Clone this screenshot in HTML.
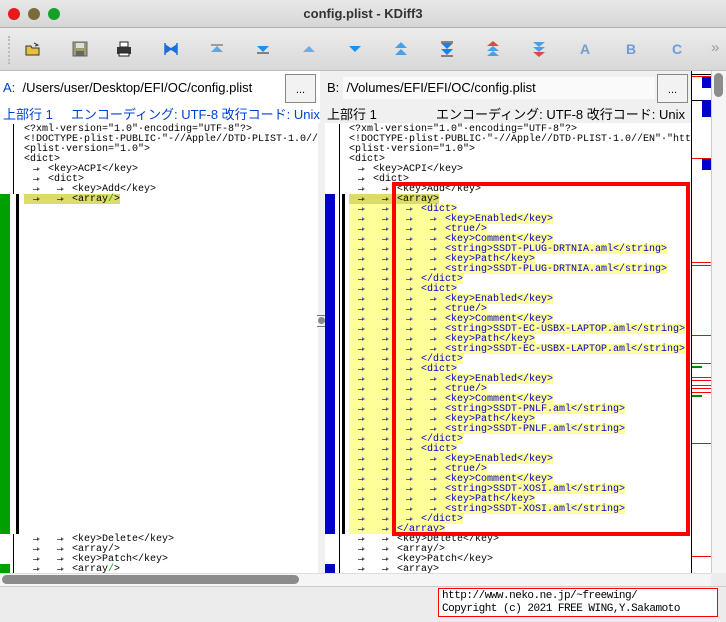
<!DOCTYPE html>
<html><head><meta charset="utf-8"><style>
*{margin:0;padding:0;box-sizing:border-box}
body{width:726px;height:622px;overflow:hidden;background:#ececec;font-family:"Liberation Sans","Noto Sans CJK JP",sans-serif;position:relative}
.abs{position:absolute}
#title{left:0;top:0;width:726px;height:28px;background:linear-gradient(#e8e8e8,#d6d6d6);border-bottom:1px solid #b0b0b0;text-align:center;font-size:13px;font-weight:bold;line-height:27px;color:#333}
.dot{top:8px;width:12px;height:12px;border-radius:50%}
#tb{left:0;top:29px;width:726px;height:42px;background:linear-gradient(#ececec,#d8d8d8);border-bottom:1px solid #bdbdbd}
.ic{top:41px;width:16px;height:16px}
.hdr{top:71px;height:52px}
.path{font-size:13px;color:#000}
.btn{width:31px;height:29px;border:1px solid #888;background:#f2f2f2;font-size:11px;text-align:center;line-height:30px}
.info{font-size:13px}
.code{font-family:"Liberation Mono",monospace;font-size:10px;line-height:11px;padding-top:3px}
.ln{height:10px;position:relative;white-space:pre}
.t{display:inline-block;width:24px;height:10px;position:relative;vertical-align:top}
.t::after{content:"";position:absolute;left:9px;top:5px;width:5px;height:1px;background:currentColor;opacity:.6}
.t::before{content:"";position:absolute;left:13px;top:3px;border-left:3px solid currentColor;border-top:2.5px solid transparent;border-bottom:2.5px solid transparent;opacity:.6}
.y{background:#ffff9a;display:inline-block;height:10px;vertical-align:top}
.d{background:#dcdc6c;display:inline-block;height:10px;vertical-align:top}
.b{color:#0000c8}
</style></head><body>
<div id="title" class="abs">config.plist - KDiff3</div>
<div class="abs dot" style="left:8px;background:#e8191b"></div>
<div class="abs dot" style="left:28px;background:#7d6a3c"></div>
<div class="abs dot" style="left:48px;background:#14a12a"></div>
<div id="tb" class="abs"></div>
<div class="abs" style="left:8px;top:36px;width:2px;height:28px;border-left:2px dotted #bbb"></div>
<div class="abs ic" style="left:25px;"><svg width="16" height="16"><path d="M1 5h5l1 2h7v7H1z" fill="#e5c13c" stroke="#333"/><path d="M9 2l4 2-3 1" fill="none" stroke="#333"/></svg></div>
<div class="abs ic" style="left:72px;"><svg width="16" height="16"><rect x="1" y="1" width="14" height="14" fill="#9c9c70" stroke="#666"/><rect x="4" y="2" width="8" height="5" fill="#ddd"/><rect x="4" y="10" width="8" height="5" fill="#666"/></svg></div>
<div class="abs ic" style="left:116px;"><svg width="16" height="16"><rect x="4" y="1" width="8" height="5" fill="#fff" stroke="#222"/><rect x="1" y="6" width="14" height="7" fill="#333"/><rect x="3" y="12" width="10" height="3" fill="#fff" stroke="#222"/></svg></div>
<div class="abs ic" style="left:163px;"><svg width="16" height="16"><path d="M2 2v12M14 2v12M2 4l6 4-6 4zM14 4l-6 4 6 4z" fill="#1a6fe0" stroke="#1a6fe0" stroke-width="1.5"/></svg></div>
<div class="abs ic" style="left:209px;"><svg width="16" height="16"><path d="M2 4h12" stroke="#555"/><path d="M8 5l6 6H2z" fill="#5aa8e8"/></svg></div>
<div class="abs ic" style="left:255px;"><svg width="16" height="16"><path d="M2 12h12" stroke="#222"/><path d="M8 11L14 5H2z" fill="#1a90f0"/></svg></div>
<div class="abs ic" style="left:301px;"><svg width="16" height="16"><path d="M8 5l6 6H2z" fill="#6aaee8"/></svg></div>
<div class="abs ic" style="left:347px;"><svg width="16" height="16"><path d="M8 11L14 5H2z" fill="#1a90f0"/></svg></div>
<div class="abs ic" style="left:393px;"><svg width="16" height="16"><path d="M8 1l6 6H2zM8 8l6 6H2z" fill="#4aa0e8"/></svg></div>
<div class="abs ic" style="left:439px;"><svg width="16" height="16"><path d="M2 1h12M2 15h12" stroke="#222"/><path d="M8 8L14 2H2zM8 14l6-6H2z" fill="#1a80e8"/></svg></div>
<div class="abs ic" style="left:485px;"><svg width="16" height="16"><path d="M8 0l6 5H2z" fill="#e04848"/><path d="M8 5l6 5H2zM8 10l6 5H2z" fill="#4aa0e8"/></svg></div>
<div class="abs ic" style="left:531px;"><svg width="16" height="16"><path d="M8 6L14 1H2zM8 11l6-5H2z" fill="#4aa0e8"/><path d="M8 16l6-5H2z" fill="#e04848"/></svg></div>
<div class="abs ic" style="left:577px;color:#6c9ed6;font-weight:bold;font-size:14px;text-align:center">A</div>
<div class="abs ic" style="left:623px;color:#6c9ed6;font-weight:bold;font-size:14px;text-align:center">B</div>
<div class="abs ic" style="left:669px;color:#6c9ed6;font-weight:bold;font-size:14px;text-align:center">C</div>
<div class="abs" style="left:711px;top:39px;color:#999;font-size:15px">»</div>

<div class="abs hdr" style="left:0;width:320px;background:#fff"></div>
<div class="abs hdr" style="left:320px;width:371px;background:#f0f0f0"></div>
<div class="abs" style="left:343px;top:77px;width:312px;height:22px;background:#fafafa"></div>
<div class="abs path" style="left:3px;top:80px"><span style="color:#0040c0">A:</span>&nbsp; /Users/user/Desktop/EFI/OC/config.plist</div>
<div class="abs path" style="left:327px;top:80px">B:&nbsp; /Volumes/EFI/EFI/OC/config.plist</div>
<div class="abs btn" style="left:285px;top:74px">...</div>
<div class="abs btn" style="left:657px;top:74px">...</div>
<div class="abs info" style="left:3px;top:104px;color:#0040d0">上部行 1&nbsp;&nbsp;&nbsp;&nbsp; エンコーディング: UTF-8 改行コード: Unix</div>
<div class="abs info" style="left:327px;top:104px;color:#000">上部行 1</div>
<div class="abs info" style="left:436px;top:104px;color:#000">エンコーディング: UTF-8 改行コード: Unix</div>

<div class="abs" style="left:0;top:123px;width:318px;height:450px;background:#fff"></div>
<div class="abs" style="left:318px;top:123px;width:7px;height:450px;background:#f0f0f0"></div>
<div class="abs" style="left:317px;top:315px;width:9px;height:12px;border-top:1px solid #777;border-bottom:1px solid #777"></div>
<div class="abs" style="left:318px;top:317px;width:7px;height:7px;border-radius:50%;background:#888"></div>
<div class="abs" style="left:325px;top:123px;width:366px;height:450px;background:#fff"></div>
<div class="abs" style="left:13px;top:124px;width:1px;height:70px;background:#000"></div>
<div class="abs" style="left:0;top:194px;width:10px;height:340px;background:#00a000"></div>
<div class="abs" style="left:16px;top:194px;width:3px;height:340px;background:#000"></div>
<div class="abs" style="left:13px;top:534px;width:1px;height:40px;background:#000"></div>
<div class="abs" style="left:0;top:564px;width:10px;height:10px;background:#00a000"></div>
<div class="abs" style="left:339px;top:124px;width:1px;height:450px;background:#000"></div>
<div class="abs" style="left:325px;top:194px;width:10px;height:340px;background:#0000c8"></div>
<div class="abs" style="left:342px;top:194px;width:3px;height:340px;background:#000"></div>
<div class="abs" style="left:325px;top:564px;width:10px;height:10px;background:#0000c8"></div>

<div class="abs code" style="left:24px;top:121px;width:294px;height:452px;overflow:hidden"><div class="ln">&lt;?xml·version="1.0"·encoding="UTF-8"?&gt;</div><div class="ln">&lt;!DOCTYPE·plist·PUBLIC·"-//Apple//DTD·PLIST·1.0//EN"</div><div class="ln">&lt;plist·version="1.0"&gt;</div><div class="ln">&lt;dict&gt;</div><div class="ln"><i class="t"></i>&lt;key&gt;ACPI&lt;/key&gt;</div><div class="ln"><i class="t"></i>&lt;dict&gt;</div><div class="ln"><i class="t"></i><i class="t"></i>&lt;key&gt;Add&lt;/key&gt;</div><div class="ln"><span class="d"><i class="t"></i><i class="t"></i>&lt;array<span style="color:#0a0">/</span>&gt;</span></div><div style="height:330px"></div><div class="ln"><i class="t"></i><i class="t"></i>&lt;key&gt;Delete&lt;/key&gt;</div><div class="ln"><i class="t"></i><i class="t"></i>&lt;array/&gt;</div><div class="ln"><i class="t"></i><i class="t"></i>&lt;key&gt;Patch&lt;/key&gt;</div><div class="ln"><i class="t"></i><i class="t"></i>&lt;array<span style="color:#0a0">/</span>&gt;</div></div>

<div class="abs code" style="left:349px;top:121px;width:342px;height:452px;overflow:hidden"><div class="ln">&lt;?xml·version="1.0"·encoding="UTF-8"?&gt;</div><div class="ln">&lt;!DOCTYPE·plist·PUBLIC·"-//Apple//DTD·PLIST·1.0//EN"·"http</div><div class="ln">&lt;plist·version="1.0"&gt;</div><div class="ln">&lt;dict&gt;</div><div class="ln"><i class="t"></i>&lt;key&gt;ACPI&lt;/key&gt;</div><div class="ln"><i class="t"></i>&lt;dict&gt;</div><div class="ln"><i class="t"></i><i class="t"></i>&lt;key&gt;Add&lt;/key&gt;</div><div class="ln"><span class="d"><i class="t"></i><i class="t"></i>&lt;array&gt;</span></div><div id="blk"></div><div class="ln b"><span class="y"><i class="t"></i><i class="t"></i>&lt;/array&gt;</span></div><div class="ln"><i class="t"></i><i class="t"></i>&lt;key&gt;Delete&lt;/key&gt;</div><div class="ln"><i class="t"></i><i class="t"></i>&lt;array/&gt;</div><div class="ln"><i class="t"></i><i class="t"></i>&lt;key&gt;Patch&lt;/key&gt;</div><div class="ln"><i class="t"></i><i class="t"></i>&lt;array&gt;</div></div>
<script>
var names=["SSDT-PLUG-DRTNIA.aml","SSDT-EC-USBX-LAPTOP.aml","SSDT-PNLF.aml","SSDT-XOSI.aml"],h="";
var T='<i class="t"></i>';
function L(n,s){return '<div class="ln b"><span class="y">'+T.repeat(n)+s+'</span></div>';}
names.forEach(function(n){
h+=L(3,'&lt;dict&gt;')+L(4,'&lt;key&gt;Enabled&lt;/key&gt;')+L(4,'&lt;true/&gt;')+L(4,'&lt;key&gt;Comment&lt;/key&gt;')+L(4,'&lt;string&gt;'+n+'&lt;/string&gt;')+L(4,'&lt;key&gt;Path&lt;/key&gt;')+L(4,'&lt;string&gt;'+n+'&lt;/string&gt;')+L(3,'&lt;/dict&gt;');
});
document.getElementById('blk').outerHTML=h;
</script>
<div class="abs" style="left:392px;top:182px;width:298px;height:354px;border:4px solid #f00"></div>

<div class="abs" style="left:691px;top:71px;width:20px;height:502px;background:#fff;border-left:1px solid #000"></div>
<div class="abs" style="left:691px;top:74px;width:21px;height:27px;border:1px solid #000"></div>
<div class="abs" style="left:702px;top:77px;width:9px;height:11px;background:#0000c8"></div>
<div class="abs" style="left:702px;top:100px;width:9px;height:17px;background:#0000c8"></div>
<div class="abs" style="left:702px;top:158px;width:9px;height:12px;background:#0000c8"></div>
<div class="abs" style="left:692px;top:76px;width:19px;height:1px;background:#f00"></div>
<div class="abs" style="left:692px;top:158px;width:19px;height:1px;background:#f00"></div>
<div class="abs" style="left:692px;top:262px;width:19px;height:1px;background:#f00"></div>
<div class="abs" style="left:692px;top:265px;width:19px;height:1px;background:#f00"></div>
<div class="abs" style="left:692px;top:335px;width:19px;height:1px;background:#f00"></div>
<div class="abs" style="left:692px;top:363px;width:19px;height:1px;background:#f00"></div>
<div class="abs" style="left:692px;top:366px;width:10px;height:2px;background:#080"></div>
<div class="abs" style="left:692px;top:377px;width:19px;height:1px;background:#f00"></div>
<div class="abs" style="left:692px;top:380px;width:19px;height:1px;background:#f00"></div>
<div class="abs" style="left:692px;top:385px;width:19px;height:1px;background:#f00"></div>
<div class="abs" style="left:692px;top:388px;width:19px;height:1px;background:#f00"></div>
<div class="abs" style="left:692px;top:392px;width:19px;height:1px;background:#f00"></div>
<div class="abs" style="left:692px;top:395px;width:10px;height:2px;background:#080"></div>
<div class="abs" style="left:692px;top:443px;width:19px;height:1px;background:#f00"></div>
<div class="abs" style="left:692px;top:556px;width:19px;height:1px;background:#f00"></div>
<div class="abs" style="left:711px;top:71px;width:15px;height:502px;background:#f5f5f5;border-left:1px solid #ccc"></div>
<div class="abs" style="left:714px;top:73px;width:9px;height:24px;border-radius:5px;background:#8c8c8c"></div>
<div class="abs" style="left:0;top:573px;width:711px;height:13px;background:#f5f5f5;border-top:1px solid #ddd"></div>
<div class="abs" style="left:2px;top:575px;width:297px;height:9px;border-radius:5px;background:#8c8c8c"></div>
<div class="abs" style="left:0;top:586px;width:726px;height:1px;background:#ccc"></div>
<div class="abs" style="left:438px;top:588px;width:280px;height:29px;border:1px solid #f00;background:#fff;font-family:'Liberation Mono',monospace;font-size:11px;line-height:13px;padding:1px 0 0 3px;letter-spacing:-0.5px;white-space:pre">http://www.neko.ne.jp/~freewing/
Copyright (c) 2021 FREE WING,Y.Sakamoto</div>
</body></html>
